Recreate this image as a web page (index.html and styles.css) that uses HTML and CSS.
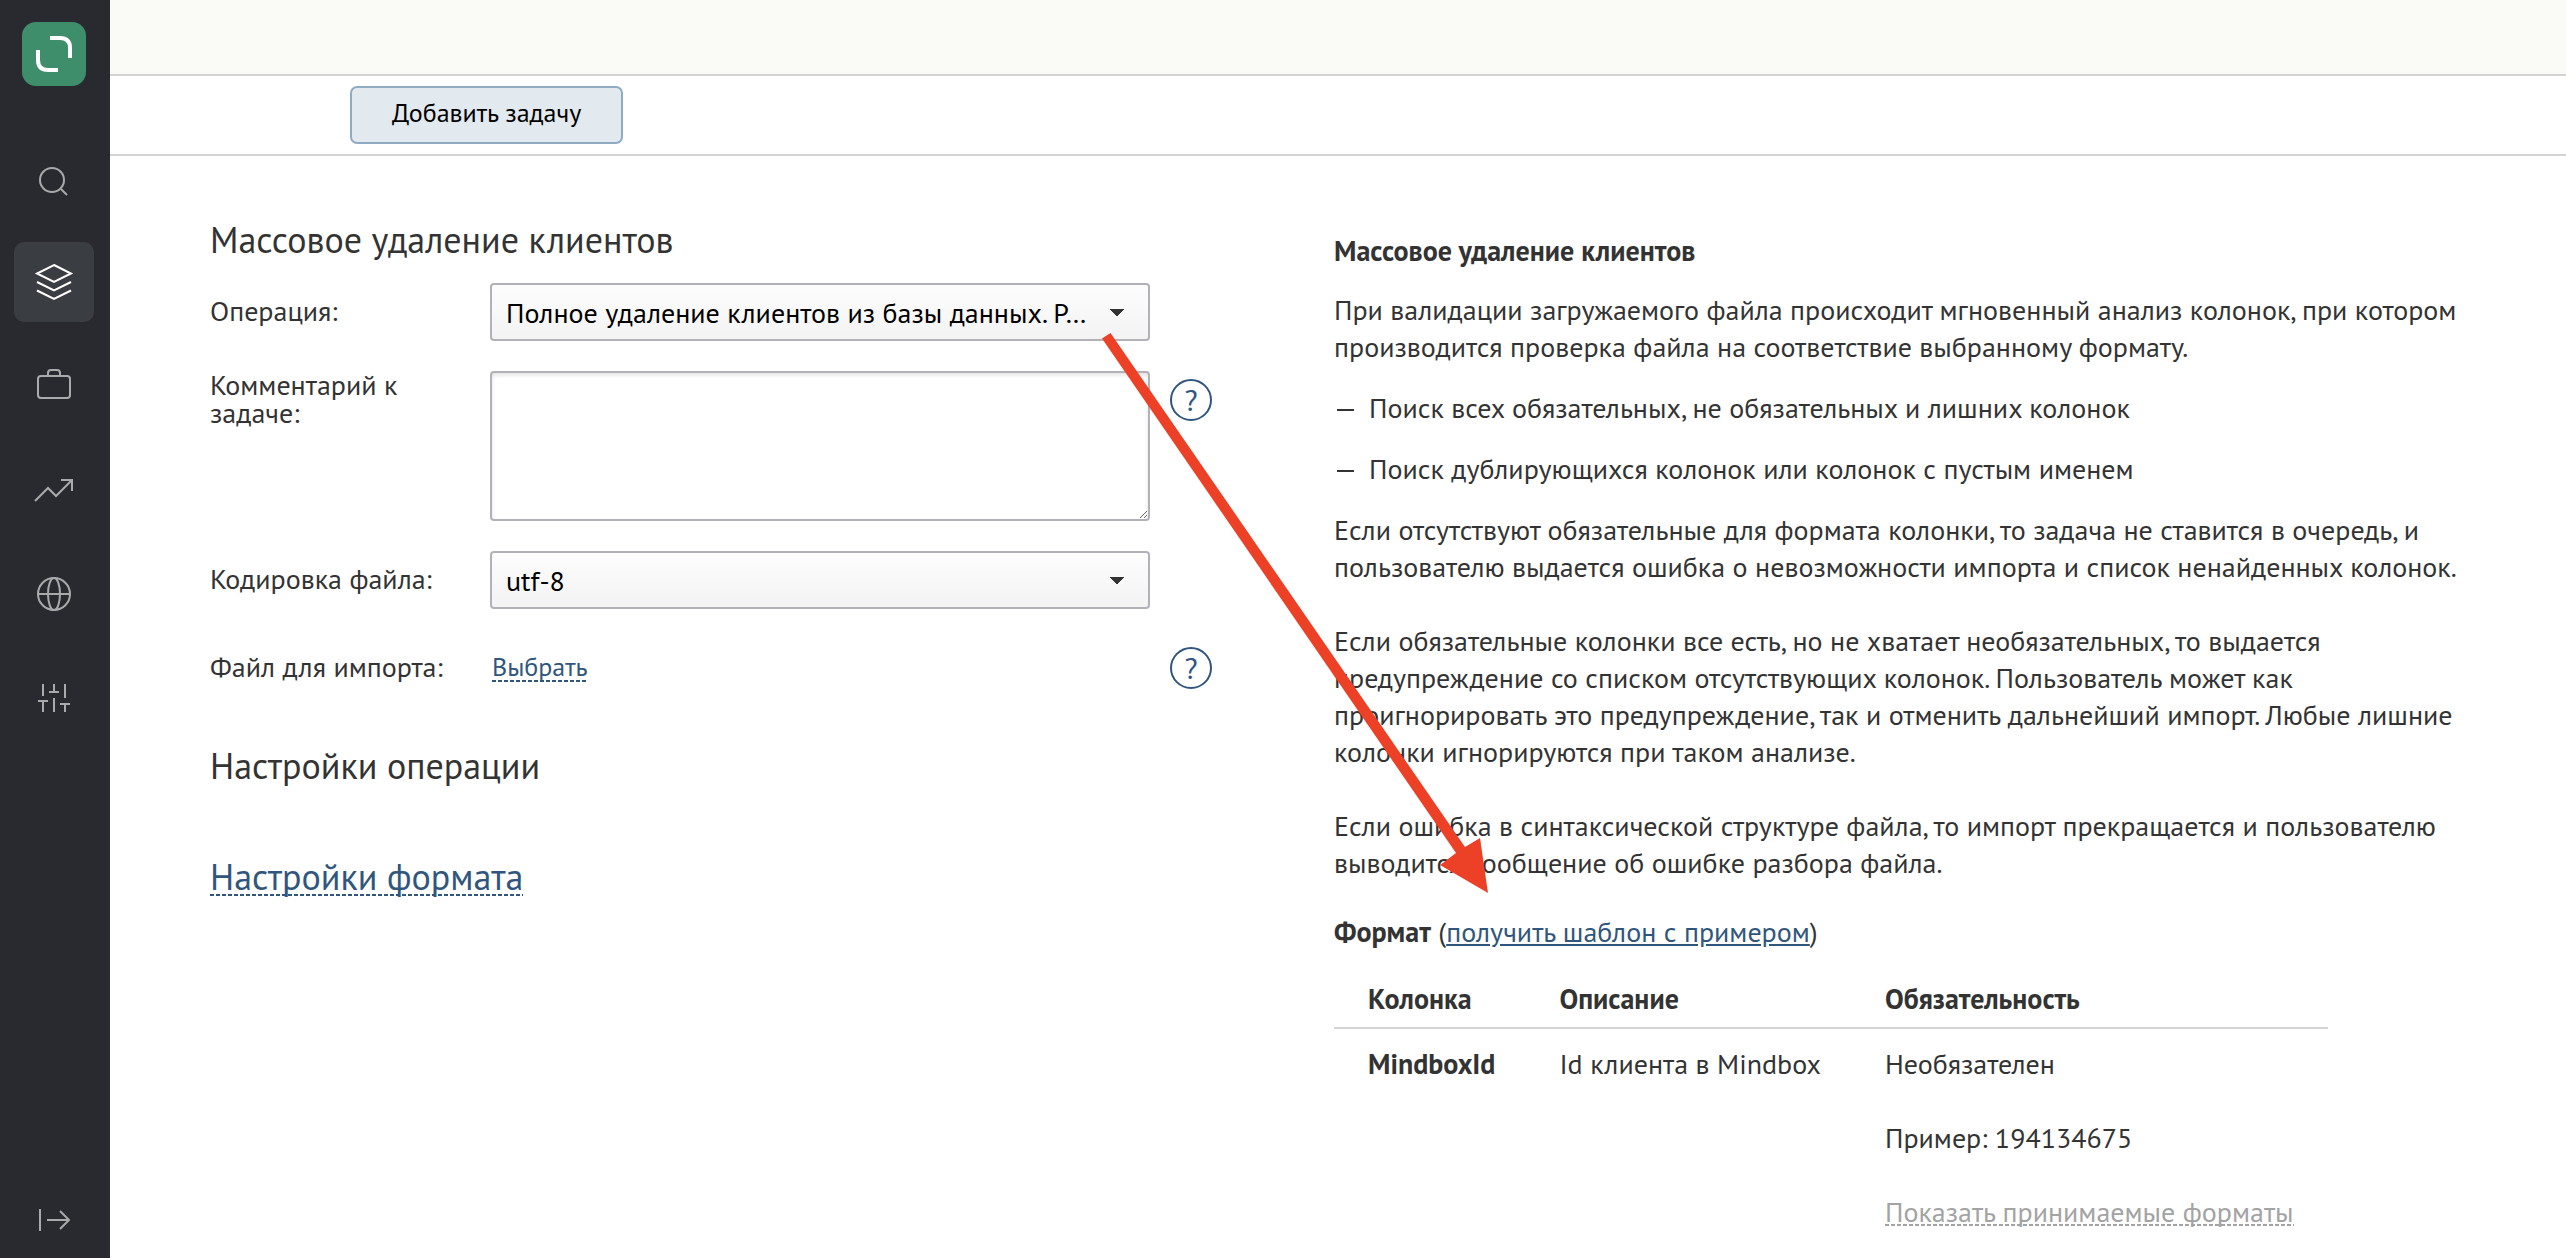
FILE: index.html
```html
<!DOCTYPE html>
<html lang="ru">
<head>
<meta charset="utf-8">
<title>Массовое удаление клиентов</title>
<link rel="stylesheet" href="styles.css">
</head>
<body>
<nav class="sidebar" aria-label="Главное меню">
  <a class="logo" href="#" aria-label="Mindbox">
    <svg viewBox="0 0 64 64" width="64" height="64" fill="none" stroke="#fff" stroke-width="4"><path d="M28 16H38Q48 16 48 26V36M16 28V38Q16 48 26 48H36"/></svg>
  </a>
  <a class="item" href="#" aria-label="Поиск">
    <svg viewBox="0 0 40 40"><circle cx="18" cy="22" r="12"/><path d="M27 31L33 37"/></svg>
  </a>
  <a class="item active" href="#" aria-label="Данные">
    <svg viewBox="0 0 40 40"><path d="M20 3L37 11.500L20 20L3 11.500ZM3 20L20 28.500L37 20M3 28.500L20 37L37 28.500"/></svg>
  </a>
  <a class="item" href="#" aria-label="Кампании">
    <svg viewBox="0 0 40 40"><rect x="4" y="10" width="32" height="22" rx="3"/><path d="M14 10V7Q14 4 17 4H23Q26 4 26 7V10"/></svg>
  </a>
  <a class="item" href="#" aria-label="Отчёты">
    <svg viewBox="0 0 40 40"><path d="M1 31L14 18L22 26L38 10M27 10H38V21"/></svg>
  </a>
  <a class="item" href="#" aria-label="Интеграции">
    <svg viewBox="0 0 40 40"><circle cx="20" cy="20" r="16"/><ellipse cx="20" cy="20" rx="6" ry="16"/><path d="M4 20H36"/></svg>
  </a>
  <a class="item" href="#" aria-label="Настройки">
    <svg viewBox="0 0 40 40"><path d="M9 6V18M9 23V34M4 23H14M20 6V14M15 14H25M20 20V34M31 6V20M31 26V34M26 26H36"/></svg>
  </a>
  <button class="item expand" type="button" aria-label="Развернуть меню">
    <svg viewBox="0 0 40 40"><path d="M6 11V33M13 22H34M26 13L35 22L26 31"/></svg>
  </button>
</nav>

<div class="page">
  <header class="topbar"></header>
  <div class="toolbar"><button class="add" type="submit" form="task">Добавить задачу</button></div>

  <main class="content">
    <form class="task" id="task">
      <h1 class="title">Массовое удаление клиентов</h1>
      <div class="row">
        <label for="operation">Операция:</label>
        <select id="operation" class="control"><option>Полное удаление клиентов из базы данных. Р…</option></select>
      </div>
      <div class="row row-top">
        <label for="comment">Комментарий к задаче:</label>
        <textarea id="comment" class="control"></textarea>
        <button class="help" type="button" aria-label="Справка о комментарии">?</button>
      </div>
      <div class="row">
        <label for="encoding">Кодировка файла:</label>
        <select id="encoding" class="control"><option>utf-8</option></select>
      </div>
      <div class="row">
        <span class="label">Файл для импорта:</span>
        <div class="file"><a class="pick" href="#">Выбрать</a></div>
        <button class="help" type="button" aria-label="Справка о файле">?</button>
      </div>
      <h2 class="title section">Настройки операции</h2>
      <h2 class="title format-link"><a class="pick" href="#">Настройки формата</a></h2>
    </form>

    <section class="info">
      <h3 class="info-title">Массовое удаление клиентов</h3>
      <p>При валидации загружаемого файла происходит мгновенный анализ колонок, при котором производится проверка файла на соответствие выбранному формату.</p>
      <ul class="checks">
        <li>Поиск всех обязательных, не обязательных и лишних колонок</li>
        <li>Поиск дублирующихся колонок или колонок с пустым именем</li>
      </ul>
      <p>Если отсутствуют обязательные для формата колонки, то задача не ставится в очередь, и пользователю выдается ошибка о невозможности импорта и список ненайденных колонок.<br><br>
      Если обязательные колонки все есть, но не хватает необязательных, то выдается предупреждение со списком отсутствующих колонок. Пользователь может как проигнорировать это предупреждение, так и отменить дальнейший импорт. Любые лишние колонки игнорируются при таком анализе.<br><br>
      Если ошибка в синтаксической структуре файла, то импорт прекращается и пользователю выводится сообщение об ошибке разбора файла.</p>
      <p class="format"><b>Формат</b> (<a class="template" href="#">получить шаблон с примером</a>)</p>
      <table class="columns">
        <thead><tr><th>Колонка</th><th>Описание</th><th>Обязательность</th></tr></thead>
        <tbody><tr>
          <td><b>MindboxId</b></td>
          <td>Id клиента в Mindbox</td>
          <td>Необязателен<br><br>Пример: 194134675<br><br><a class="formats" href="#">Показать принимаемые форматы</a></td>
        </tr></tbody>
      </table>
    </section>
  </main>

  <svg class="arrow" viewBox="0 0 400 570" width="400" height="570" aria-hidden="true"><path d="M2 12.500L10.500 7L365 521L380 512L388 567L340 539L356 527Z"/></svg>
</div>
</body>
</html>
```
FILE: styles.css
```css
* { box-sizing: border-box; }

body {
  margin: 0;
  min-height: 100vh;
  display: flex;
  background: #fff;
  color: #333;
  font: 28px/37px "PT Sans", "Noto Sans", sans-serif;
}

h1, h2, h3, p, ul { margin: 0; }

a { color: #30567d; }

/* Sidebar */
.sidebar {
  flex: none;
  width: 110px;
  padding: 22px 14px 0;
  display: flex;
  flex-direction: column;
  gap: 24px;
  background: #292a2f;
}

.logo {
  width: 64px;
  height: 64px;
  margin: 0 0 28px 8px;
  border-radius: 14px;
  background: #3f8e6b;
}

.logo svg { display: block; }

.item {
  width: 80px;
  height: 80px;
  padding: 20px;
  border: 0;
  border-radius: 10px;
  background: none;
}

.item svg {
  display: block;
  width: 40px;
  height: 40px;
  fill: none;
  stroke: #a9aaac;
  stroke-width: 2;
}

.active { background: #3a3d42; }

.item.active svg { stroke: #fff; }

.expand { margin: auto 0 0; }

/* Page frame */
.page {
  position: relative;
  flex: 1;
  min-width: 0;
}

.topbar {
  height: 76px;
  border-bottom: 2px solid #d4d4d4;
  background: #fafbf6;
}

.toolbar {
  padding: 10px 240px;
  border-bottom: 2px solid #d4d4d4;
}

.add {
  display: block;
  height: 58px;
  padding: 0 40px 4px;
  border: 2px solid #91abc3;
  border-radius: 7px;
  background: #e2e9ef;
  color: #000;
  font: 26px/34px "PT Sans", "Noto Sans", sans-serif;
}

.content {
  display: grid;
  grid-template-columns: 1002fr 1132fr;
  gap: 122px;
  align-items: start;
  padding: 61px 100px 0;
}

/* Task form */
.task {
  display: flex;
  flex-direction: column;
  gap: 30px;
}

.title {
  margin-bottom: -10px;
  font-size: 36px;
  line-height: 46px;
  font-weight: 400;
}

.row {
  display: grid;
  grid-template-columns: 280px 1fr 42px;
  min-height: 58px;
  align-items: center;
}

.row label, .label {
  max-width: 250px;
  padding-bottom: 2px;
  line-height: 28px;
}

.row-top { align-items: start; }

.control {
  width: calc(100% - 20px);
  border: 2px solid #b1b1b7;
  border-radius: 4px;
  color: #000;
  font: 28px/37px "PT Sans", "Noto Sans", sans-serif;
}

select.control {
  height: 58px;
  padding: 0 50px 0 14px;
  appearance: none;
  background:
    conic-gradient(from -41deg at 50% 100%, #333 82deg, transparent 0) right 24px top 24px / 14px 8px no-repeat,
    linear-gradient(#fdfdfd, #f3f3f3);
}

textarea.control {
  display: block;
  height: 150px;
  padding: 8px 14px;
  box-shadow: inset 0 2px 4px #0000001f;
  resize: both;
}

.help {
  width: 42px;
  height: 42px;
  padding: 0;
  border: 2px solid #30567d;
  border-radius: 50%;
  background: none;
  color: #30567d;
  font: 30px/36px "PT Sans", "Noto Sans", sans-serif;
}

.row-top .help { margin-top: 8px; }

.file {
  padding: 0 2px 3px;
  font-size: 26px;
}

.pick, .formats {
  text-decoration: none;
  background: repeating-linear-gradient(90deg, currentColor 0 4px, transparent 4px 6px) 0 calc(100% - 4px) / 100% 2px no-repeat;
}

.file .pick { background-position-y: calc(100% - 1px); }

.section { margin: 16px 0 0; }

.format-link { margin: 35px 0 0; }

/* Description */
.info { padding-top: 15px; }

.info-title {
  margin-bottom: 22px;
  font-size: 28px;
  line-height: 37px;
}

.checks {
  margin: 24px 0;
  padding: 0;
  display: grid;
  gap: 24px;
  list-style: none;
}

.checks li {
  display: flex;
  gap: 15px;
  padding-left: 3px;
}

.checks li::before {
  content: "";
  width: 17px;
  height: 2px;
  margin-top: 20px;
  background: #333;
}

.format { margin-top: 32px; }

.columns {
  margin-top: 30px;
  border-collapse: collapse;
  text-align: left;
}

.columns th {
  padding: 0 32px 10px;
  border-bottom: 2px solid #d4d4d4;
}

.columns td {
  padding: 16px 32px 0;
  vertical-align: top;
}

.columns th:first-child, .columns td:first-child { padding-left: 34px; }

.columns th:last-child, .columns td:last-child { padding-right: 34px; }

.columns .formats { color: #a3a3a3; }

/* Annotation drawn over the page */
.arrow {
  position: absolute;
  left: 990px;
  top: 326px;
  fill: #ec4127;
  pointer-events: none;
}
```
